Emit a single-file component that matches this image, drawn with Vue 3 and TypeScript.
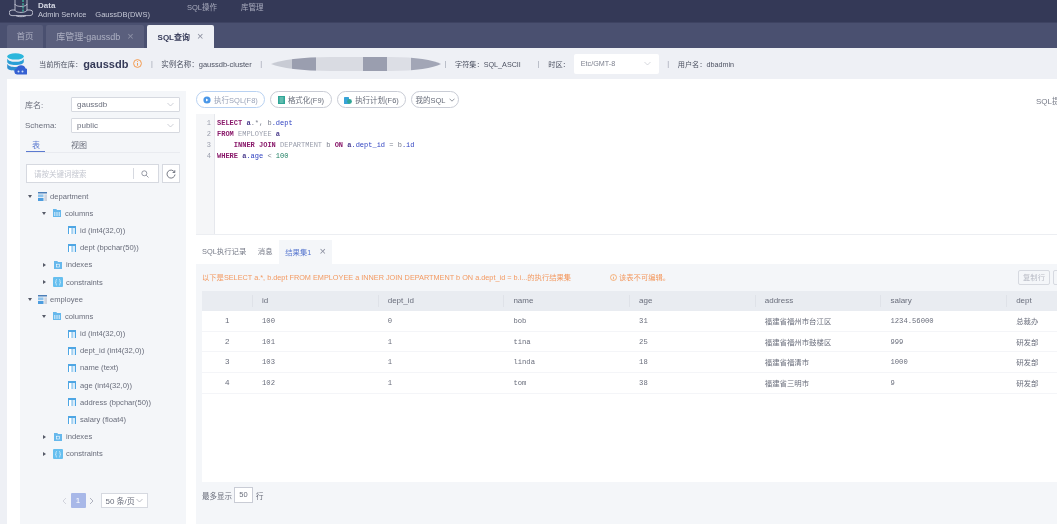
<script setup lang="ts">
type TreeNode = { label: string; level: number; kind: string; open?: boolean }

const tree: TreeNode[] = [
  { label: 'department', level: 0, kind: 'table', open: true },
  { label: 'columns', level: 1, kind: 'columns', open: true },
  { label: 'id (int4(32,0))', level: 2, kind: 'col' },
  { label: 'dept (bpchar(50))', level: 2, kind: 'col' },
  { label: 'indexes', level: 1, kind: 'indexes', open: false },
  { label: 'constraints', level: 1, kind: 'constraints', open: false },
  { label: 'employee', level: 0, kind: 'table', open: true },
  { label: 'columns', level: 1, kind: 'columns', open: true },
  { label: 'id (int4(32,0))', level: 2, kind: 'col' },
  { label: 'dept_id (int4(32,0))', level: 2, kind: 'col' },
  { label: 'name (text)', level: 2, kind: 'col' },
  { label: 'age (int4(32,0))', level: 2, kind: 'col' },
  { label: 'address (bpchar(50))', level: 2, kind: 'col' },
  { label: 'salary (float4)', level: 2, kind: 'col' },
  { label: 'indexes', level: 1, kind: 'indexes', open: false },
  { label: 'constraints', level: 1, kind: 'constraints', open: false }
]

const columns = ['', 'id', 'dept_id', 'name', 'age', 'address', 'salary', 'dept']

const rows = [
  ['1', '100', '0', 'bob', '31', '福建省福州市台江区', '1234.56000', '总裁办'],
  ['2', '101', '1', 'tina', '25', '福建省福州市鼓楼区', '999', '研发部'],
  ['3', '103', '1', 'linda', '18', '福建省福清市', '1000', '研发部'],
  ['4', '102', '1', 'tom', '38', '福建省三明市', '9', '研发部']
]
</script>

<template>
  <div class="page">
    <header class="topbar">
      <svg class="logo" width="24" height="20" viewBox="0 0 24 20" fill="none" stroke="#d5d8e4" stroke-width="0.8">
        <path d="M6 -1v11c0 1.400 2.700 2.400 6 2.400s6-1 6-2.400V-1M6 4c0 1.400 2.700 2.400 6 2.400s6-1 6-2.400" />
        <path d="M6 10H3a2.800 2.800 0 0 0 0 5.600h18a2.800 2.800 0 0 0 0-5.600h-3" />
        <path d="M7 15.600c1 1.400 9 1.400 10 0" />
        <path d="M14 0v13" stroke="#3fc8a8" stroke-width="1.200" stroke-dasharray="2 1.200" />
      </svg>
      <div class="brand">
        <div class="brand-top">Data</div>
        <div class="brand-sub"><span>Admin Service</span><span>GaussDB(DWS)</span></div>
      </div>
      <nav class="menu">
        <span>SQL操作</span>
        <span>库管理</span>
      </nav>
    </header>

    <div class="tabbar">
      <div class="tab home">首页</div>
      <div class="tab lib">库管理-gaussdb<i>×</i></div>
      <div class="tab active">SQL查询<i>×</i></div>
    </div>

    <div class="infobar">
      <svg class="db-icon" width="20" height="22" viewBox="0 0 20 22">
        <ellipse cx="8.500" cy="3.400" rx="8.300" ry="3.200" fill="#2bb6dc" />
        <path d="M.2 5.400c1 2.400 4.400 3.400 8.300 3.400s7.300-1 8.300-3.400v3.400c0 2-3.700 3.300-8.300 3.300S.2 10.800.2 8.800z" fill="#2a9fd6" />
        <path d="M.2 10.800c1 2.400 4.400 3.300 8.300 3.300 1.400 0 2.800-.2 4-.5l-3 4.400C4.300 18 .2 16.600.2 14.600z" fill="#2f8fd0" />
        <path d="M10 21.500a3 3 0 0 1-.4-5.900 4.800 4.800 0 0 1 9-.2 3.100 3.100 0 0 1 .4 6.100z" fill="#3560d2" />
        <circle cx="11.500" cy="18.500" r="1" fill="#cfe0fb" /><circle cx="15.500" cy="18.500" r="1" fill="#cfe0fb" />
      </svg>
      <span class="cur-label">当前所在库：</span>
      <strong class="cur-db">gaussdb</strong>
      <svg class="warn" width="9" height="9" viewBox="0 0 9 9" fill="none" stroke="#f39a4e" stroke-width="1">
        <circle cx="4.500" cy="4.500" r="3.900" /><path d="M4.500 2.200v.9M4.500 4v2.700" />
      </svg>
      <span class="sep">|</span>
      <span class="instance">实例名称：gaussdb-cluster</span>
      <span class="sep">|</span>
      <svg class="blob" width="170" height="16" viewBox="0 0 170 16">
        <defs>
          <clipPath id="blobclip"><path d="M0 8C10 4 30 1 60 1h60c25 0 42 3 50 7-8 4-25 7-50 7H60C30 15 10 12 0 8z" /></clipPath>
        </defs>
        <g clip-path="url(#blobclip)">
          <rect width="21" height="16" fill="#c8cbd4" />
          <rect x="21" width="24" height="16" fill="#9a9eaf" />
          <rect x="45" width="47" height="16" fill="#d9dbe2" />
          <rect x="92" width="24" height="16" fill="#9a9eaf" />
          <rect x="116" width="24" height="16" fill="#dcdee5" />
          <rect x="140" width="30" height="16" fill="#a2a6b6" />
        </g>
      </svg>
      <span class="sep after-blob">|</span>
      <span>字符集：SQL_ASCII</span>
      <span class="sep wide">|</span>
      <span>时区：</span>
      <div class="tz">
        <span>Etc/GMT-8</span>
        <svg class="chev" width="7" height="5" viewBox="0 0 7 5" fill="none" stroke="#c4c7d0" stroke-width="0.7"><path d="M.5 1l3 3 3-3" /></svg>
      </div>
      <span class="sep">|</span>
      <span>用户名：dbadmin</span>
    </div>

    <div class="content">
      <aside class="side">
        <div class="field">
          <label>库名:</label>
          <div class="select">
            <span>gaussdb</span>
            <svg class="chev" width="7" height="5" viewBox="0 0 7 5" fill="none" stroke="#b9bcc6" stroke-width="0.7"><path d="M.5 1l3 3 3-3" /></svg>
          </div>
        </div>
        <div class="field">
          <label>Schema:</label>
          <div class="select">
            <span>public</span>
            <svg class="chev" width="7" height="5" viewBox="0 0 7 5" fill="none" stroke="#b9bcc6" stroke-width="0.7"><path d="M.5 1l3 3 3-3" /></svg>
          </div>
        </div>
        <div class="side-tabs">
          <span class="side-tab on">表</span>
          <span class="side-tab">视图</span>
        </div>
        <div class="search-row">
          <div class="search">
            <span class="ph">请按关键词搜索</span>
            <span class="search-btn">
              <svg width="8" height="8" viewBox="0 0 8 8" fill="none" stroke="#7d818f" stroke-width="0.8"><circle cx="3.300" cy="3.300" r="2.500" /><path d="M5.200 5.200L7.500 7.500" /></svg>
            </span>
          </div>
          <div class="refresh">
            <svg width="10" height="10" viewBox="0 0 10 10" fill="none" stroke="#555a68" stroke-width="0.8"><path d="M8.600 3.300A4 4 0 1 0 9 5.500M8.800 1.200v2.300H6.600" /></svg>
          </div>
        </div>
        <ul class="tree">
          <li v-for="(node, i) in tree" :key="i" :class="['node', 'lv' + node.level]">
            <span v-if="node.level < 2" :class="['caret', node.open ? 'down' : 'right']"></span>
            <svg v-if="node.kind === 'table'" class="ico wide-ico" width="9" height="9" viewBox="0 0 9 9">
              <rect width="9" height="1.500" fill="#4c7fb8" />
              <rect y="2.400" width="5.500" height="2.800" fill="#8fc3ec" />
              <rect y="6" width="5.500" height="3" fill="#4d9ddf" />
              <rect x="6.300" y="2.400" width="2.700" height="6.600" fill="#cfd4de" />
            </svg>
            <svg v-else-if="node.kind === 'columns'" class="ico" width="8" height="8" viewBox="0 0 8 8">
              <path d="M0 0h3.200l.9 1H8v7H0z" fill="#66b8ec" />
              <path d="M1.800 3v4M4 3v4M6.200 3v4" stroke="#fff" stroke-width="0.8" />
            </svg>
            <svg v-else-if="node.kind === 'indexes'" class="ico" width="8" height="8" viewBox="0 0 8 8">
              <path d="M0 0h3.200l.9 1H8v7H0z" fill="#66b8ec" />
              <rect x="2.600" y="3.200" width="2.800" height="2.800" fill="none" stroke="#fff" stroke-width="0.6" />
            </svg>
            <svg v-else-if="node.kind === 'constraints'" class="ico box-ico" width="10" height="10" viewBox="0 0 10 10">
              <rect width="10" height="10" rx="1" fill="#66bfef" />
              <path d="M4 2.500c-1 0-1 .5-1 1.200v1c0 .4-.4.600-.7.600.3 0 .7.200.7.600v.8c0 .8 0 1.300 1 1.300M6 2.500c1 0 1 .5 1 1.200v1c0 .4.400.600.700.600-.3 0-.7.200-.7.600v.8c0 .8 0 1.300-1 1.300" fill="none" stroke="#fff" stroke-width="0.6" />
            </svg>
            <svg v-else class="ico" width="8" height="8" viewBox="0 0 8 8">
              <rect width="8" height="8" fill="#4ea6e4" />
              <rect x="1" y="2" width="2.600" height="6" fill="#fff" />
              <rect x="4.400" y="2" width="2.600" height="6" fill="#d9ecfa" />
            </svg>
            <span class="node-label">{{ node.label }}</span>
          </li>
        </ul>
        <div class="pager">
          <svg width="5" height="8" viewBox="0 0 5 8" fill="none" stroke="#c9ccd5" stroke-width="0.8"><path d="M4 1L1 4l3 3" /></svg>
          <span class="page-no">1</span>
          <svg width="5" height="8" viewBox="0 0 5 8" fill="none" stroke="#9da1ae" stroke-width="0.8"><path d="M1 1l3 3-3 3" /></svg>
          <div class="page-size">
            <span>50 条/页</span>
            <svg width="7" height="5" viewBox="0 0 7 5" fill="none" stroke="#9da1ae" stroke-width="0.7"><path d="M.5 1l3 3 3-3" /></svg>
          </div>
        </div>
      </aside>

      <main class="main">
        <div class="toolbar">
          <button class="btn run">
            <svg width="8" height="8" viewBox="0 0 8 8"><circle cx="4" cy="4" r="3.600" fill="#4a97e8" /><path d="M3 2.400L5.500 4 3 5.600z" fill="#fff" /></svg>
            执行SQL(F8)
          </button>
          <button class="btn fmt">
            <svg width="7" height="8" viewBox="0 0 7 8"><rect width="7" height="8" fill="#2fa596" /><path d="M1.500 2h4M1.500 4h4M1.500 6h4" stroke="#bfe8e0" stroke-width="0.7" /></svg>
            格式化(F9)
          </button>
          <button class="btn plan">
            <svg width="8" height="8" viewBox="0 0 8 8"><rect y="1" width="5" height="7" rx="0.600" fill="#38a3d8" /><circle cx="5.500" cy="5.500" r="2.400" fill="#2fa596" /></svg>
            执行计划(F6)
          </button>
          <button class="btn mine">
            我的SQL
            <svg width="6" height="4" viewBox="0 0 6 4" fill="none" stroke="#666b78" stroke-width="0.7"><path d="M.5.7L3 3.200 5.500.7" /></svg>
          </button>
          <span class="sql-more">SQL提示</span>
        </div>

        <div class="editor">
          <div class="gutter"><span>1</span><span>2</span><span>3</span><span>4</span></div>
          <pre class="code"><b>SELECT</b> <em>a</em>.*, b<u>.dept</u>
<b>FROM</b> <s>EMPLOYEE</s> <em>a</em>
    <b>INNER JOIN</b> <s>DEPARTMENT</s> b <b>ON</b> <em>a</em><u>.dept_id</u> = b<u>.id</u>
<b>WHERE</b> <em>a</em><u>.age</u> &lt; <tt>100</tt></pre>
        </div>

        <div class="res-tabs">
          <span class="res-tab">SQL执行记录</span>
          <span class="res-tab">消息</span>
          <span class="res-tab on">结果集1<i>×</i></span>
        </div>

        <section class="result">
          <div class="msg">
            <span class="msg-text">以下是SELECT a.*, b.dept FROM EMPLOYEE a INNER JOIN DEPARTMENT b ON a.dept_id = b.i...的执行结果集</span>
            <span class="msg-warn">
              <svg width="7" height="7" viewBox="0 0 7 7" fill="none" stroke="#f39a4e" stroke-width="0.7"><circle cx="3.500" cy="3.500" r="3" /><path d="M3.500 1.700v.6M3.500 3v2.300" /></svg>
              该表不可编辑。
            </span>
            <span class="copy">复制行</span>
            <span class="copy blank"></span>
          </div>
          <div class="table">
            <div class="tr head">
              <div v-for="(c, i) in columns" :key="i" class="th">{{ c }}</div>
            </div>
            <div v-for="r in rows" :key="r[0]" class="tr">
              <div v-for="(v, j) in r" :key="j" :class="['td', j === 0 ? 'idx' : '', j === 5 || j === 7 ? 'cjk' : '']">{{ v }}</div>
            </div>
          </div>
          <div class="limit">
            <span>最多显示</span>
            <span class="limit-input">50</span>
            <span>行</span>
          </div>
        </section>
      </main>
    </div>
  </div>
</template>

<style>
html, body {
  margin: 0;
  overflow: hidden;
}
</style>

<style scoped>
.page {
  width: 1057px;
  height: 524px;
  overflow: hidden;
  background: #eef0f5;
  font-family: "Liberation Sans", "Noto Sans CJK SC", sans-serif;
  font-size: 8px;
  color: #555a68;
  display: flex;
  flex-direction: column;
  filter: blur(0.35px);
}

.topbar {
  height: 22px;
  flex: none;
  background: #343957;
  border-bottom: 1px solid #3e4362;
  display: flex;
  align-items: flex-start;
  padding-left: 9px;
  color: #c5c8d6;
}

.logo {
  margin-top: 0;
  overflow: hidden;
}

.brand {
  margin-left: 5px;
  line-height: 9px;
  margin-top: 1px;
}

.brand-top {
  font-weight: 700;
  color: #d5d8e4;
}

.brand-sub {
  display: flex;
  gap: 9px;
  font-size: 7.5px;
  white-space: nowrap;
}

.menu {
  display: flex;
  gap: 24px;
  margin-left: 37px;
  line-height: 16px;
  color: #a8abbd;
  font-size: 7.5px;
}

.tabbar {
  height: 25px;
  flex: none;
  background: #4a5070;
  display: flex;
  align-items: flex-end;
  padding-left: 7px;
  gap: 3px;
}

.tab {
  height: 23px;
  line-height: 23px;
  background: #5a5f7d;
  color: #aeb1c3;
  text-align: center;
  border-radius: 2px 2px 0 0;
  white-space: nowrap;
  font-size: 8.5px;
}

.tab i {
  font-style: normal;
  font-size: 11px;
  margin-left: 7px;
  color: #8f93a8;
  vertical-align: -0.5px;
}

.tab.home {
  width: 36px;
}

.tab.lib {
  width: 98px;
  font-size: 9px;
}

.tab.active {
  width: 67px;
  background: #eef0f5;
  color: #343957;
  font-size: 8px;
  font-weight: 700;
}

.tab.active i {
  font-weight: 400;
  color: #8a8e9e;
}

.infobar {
  height: 31px;
  flex: none;
  display: flex;
  align-items: center;
  padding-left: 7px;
  white-space: nowrap;
  font-size: 7.2px;
  color: #4d5262;
}

.db-icon {
  margin-right: 12px;
}

.cur-db {
  font-size: 11px;
  color: #343957;
  margin-left: 1px;
  margin-right: 5px;
}

.instance {
  font-size: 7.5px;
}

.sep {
  margin: 0 8.5px;
  color: #9a9eac;
}

.blob {
  margin-right: 4px;
}

.after-blob {
  margin-left: 0;
}

.sep.wide {
  margin-left: 17px;
}

.tz {
  width: 85px;
  height: 20px;
  margin-left: 4px;
  padding: 0 8px 0 7px;
  box-sizing: border-box;
  background: #fff;
  border-radius: 2px;
  display: flex;
  align-items: center;
  justify-content: space-between;
  color: #7b7f8d;
}

.content {
  flex: 1;
  min-height: 0;
  margin-left: 7px;
  background: #fff;
  display: flex;
  padding: 12px 0 0 13px;
  gap: 10px;
}

.side {
  width: 166px;
  flex: none;
  background: #f4f6f9;
  padding: 6px 6px 0;
  box-sizing: border-box;
  display: flex;
  flex-direction: column;
  color: #6a6e7c;
}

.field {
  display: flex;
  align-items: center;
  height: 15px;
  margin-bottom: 6px;
}

.field label {
  width: 45px;
  flex: none;
  margin-left: -1px;
  padding-right: 1px;
}

.select {
  flex: 1;
  height: 15px;
  box-sizing: border-box;
  background: #fff;
  border: 1px solid #d6d9e0;
  border-radius: 1px;
  padding: 0 5px;
  display: flex;
  align-items: center;
  justify-content: space-between;
}

.side-tabs {
  display: flex;
  height: 13px;
  border-bottom: 1px solid #e9ebf0;
  align-items: flex-start;
}

.side-tab {
  position: relative;
  width: 45px;
  line-height: 13px;
}

.side-tab:first-child {
  padding-left: 6px;
  box-sizing: border-box;
  color: #5b7ad0;
}

.side-tab.on::after {
  content: "";
  position: absolute;
  left: 0;
  width: 19px;
  top: 12px;
  height: 1px;
  background: #5b7ad0;
}

.search-row {
  display: flex;
  gap: 3px;
  margin-top: 11px;
}

.search {
  width: 133px;
  height: 19px;
  box-sizing: border-box;
  background: #fff;
  border: 1px solid #d6d9e0;
  display: flex;
  align-items: center;
  padding-left: 7px;
  justify-content: space-between;
}

.ph {
  color: #c3c6cf;
  font-size: 7.5px;
}

.search-btn {
  width: 21px;
  height: 11px;
  border-left: 1px solid #d6d9e0;
  display: flex;
  align-items: center;
  justify-content: center;
  margin-right: 3px;
}

.refresh {
  width: 18px;
  height: 19px;
  box-sizing: border-box;
  border: 1px solid #d6d9e0;
  background: #fff;
  display: flex;
  align-items: center;
  justify-content: center;
}

.tree {
  list-style: none;
  margin: 4.5px 0 0;
  padding: 0;
}

.node {
  height: 17.2px;
  display: flex;
  align-items: center;
  white-space: nowrap;
  font-size: 7.6px;
}

.node.lv0 {
  padding-left: 2px;
}

.node.lv1 {
  padding-left: 16px;
}

.node.lv2 {
  padding-left: 42px;
}

.caret {
  width: 0;
  height: 0;
  box-sizing: border-box;
}

.caret.down {
  margin-right: 6px;
  border-left: 2.5px solid transparent;
  border-right: 2.5px solid transparent;
  border-top: 3px solid #555a68;
}

.caret.right {
  margin-left: 1px;
  margin-right: 7px;
  border-top: 2.5px solid transparent;
  border-bottom: 2.5px solid transparent;
  border-left: 3px solid #555a68;
}

.lv1 .caret.down {
  margin-right: 7px;
}

.lv1 .caret.right {
  margin-right: 8px;
}

.ico {
  flex: none;
  margin-right: 4px;
}

.ico.wide-ico {
  margin-right: 3px;
}

.ico.box-ico {
  margin-left: -1px;
  margin-right: 3px;
}

.pager {
  margin-top: 30.5px;
  padding-left: 36px;
  display: flex;
  align-items: center;
  gap: 3.5px;
}

.page-no {
  width: 15px;
  height: 15px;
  line-height: 15px;
  text-align: center;
  background: #a8b8e8;
  color: #fff;
  border-radius: 1px;
}

.page-size {
  width: 47px;
  height: 15px;
  box-sizing: border-box;
  margin-left: 3px;
  background: #fff;
  border: 1px solid #d6d9e0;
  display: flex;
  align-items: center;
  justify-content: space-between;
  padding: 0 4px;
  white-space: nowrap;
}

.main {
  flex: 1;
  min-width: 0;
  display: flex;
  flex-direction: column;
  overflow: hidden;
}

.toolbar {
  height: 18px;
  display: flex;
  gap: 5px;
  align-items: flex-start;
  flex: none;
  position: relative;
}

.btn {
  height: 17px;
  box-sizing: border-box;
  border: 1px solid #c9ccd5;
  border-radius: 9px;
  background: #fff;
  font: inherit;
  font-size: 7.5px;
  color: #666b78;
  padding: 0;
  display: flex;
  align-items: center;
  justify-content: center;
  gap: 3px;
  white-space: nowrap;
}

.btn.run {
  width: 69px;
  border-color: #b9d2f2;
  color: #9aa3b8;
}

.btn.fmt {
  width: 62px;
}

.btn.plan {
  width: 69px;
}

.btn.mine {
  width: 48px;
}

.sql-more {
  position: absolute;
  left: 840px;
  top: 4px;
  white-space: nowrap;
  color: #777b88;
}

.editor {
  height: 120px;
  margin-top: 5px;
  flex: none;
  display: flex;
  border-bottom: 1px solid #eceef2;
}

.gutter {
  width: 19px;
  flex: none;
  box-sizing: border-box;
  background: #f5f6f8;
  border-right: 1px solid #e6e8ed;
  padding: 4px 3px 0 0;
  display: flex;
  flex-direction: column;
  align-items: flex-end;
  font-family: "Liberation Mono", monospace;
  font-size: 7px;
  line-height: 11px;
  color: #9a9eac;
}

.code {
  margin: 0;
  padding: 4px 0 0 2px;
  font-family: "Liberation Mono", monospace;
  font-size: 7px;
  line-height: 11px;
  color: #7d818f;
}

.code b {
  font-weight: 700;
  color: #8a1a6b;
}

.code em {
  font-style: normal;
  font-weight: 700;
  color: #4a3c8c;
}

.code u {
  text-decoration: none;
  color: #2c3fc0;
}

.code s {
  text-decoration: none;
  color: #9a9eac;
}

.code tt {
  font-family: inherit;
  color: #1e7f62;
}

.res-tabs {
  height: 29px;
  flex: none;
  display: flex;
  align-items: flex-end;
  padding-left: 6px;
  gap: 11.5px;
  font-size: 7.4px;
}

.res-tab {
  height: 24px;
  line-height: 23px;
  white-space: nowrap;
  color: #777b88;
}

.res-tab.on {
  width: 53px;
  margin-left: -5px;
  box-sizing: border-box;
  padding-left: 6px;
  background: #f4f6f9;
  color: #5b7ad0;
}

.res-tab i {
  font-style: normal;
  font-size: 11px;
  color: #8a8e9e;
  margin-left: 8px;
  vertical-align: -0.5px;
}

.result {
  flex: 1;
  min-height: 0;
  background: #f4f6f9;
  padding-left: 6px;
  display: flex;
  flex-direction: column;
}

.msg {
  height: 26px;
  margin-bottom: 1px;
  flex: none;
  display: flex;
  align-items: center;
  color: #f39a62;
  white-space: nowrap;
  font-size: 7.3px;
}

.msg-text {
  width: 408px;
  flex: none;
}

.msg-warn {
  display: flex;
  align-items: center;
  gap: 2px;
  width: 408px;
  flex: none;
}

.copy {
  width: 32px;
  height: 15px;
  box-sizing: border-box;
  line-height: 13px;
  text-align: center;
  border: 1px solid #d6d9e0;
  border-radius: 2px;
  color: #b9bcc6;
  flex: none;
  margin-right: 3px;
}

.copy.blank {
  width: 20px;
}

.table {
  flex: none;
  height: 191px;
  background: #fff;
  overflow: hidden;
  display: flex;
  flex-direction: column;
}

.tr {
  display: grid;
  grid-template-columns: 50px repeat(7, 125.7px);
  height: 20.7px;
  border-bottom: 1px solid #f4f5f8;
  box-sizing: border-box;
  flex: none;
}

.tr.head {
  height: 20px;
  background: #e9ecf1;
  border-bottom: 0;
}

.th {
  line-height: 20px;
  padding-left: 10px;
  color: #6a6e7c;
  position: relative;
}

.th:not(:first-child)::before {
  content: "";
  position: absolute;
  left: 0;
  top: 4px;
  bottom: 4px;
  width: 1px;
  background: #dfe2e8;
}

.td {
  line-height: 20px;
  padding-left: 10px;
  font-family: "Liberation Mono", monospace;
  font-size: 7.2px;
  color: #6a6e7c;
  white-space: nowrap;
}

.td.idx {
  font-family: "Liberation Sans", sans-serif;
  font-size: 8px;
  padding-left: 23px;
}

.td.cjk {
  font-family: "Noto Sans CJK SC", sans-serif;
  font-size: 7.4px;
}

.limit {
  display: flex;
  align-items: center;
  gap: 2px;
  height: 16px;
  margin-top: 5px;
  color: #6a6e7c;
  font-size: 7.5px;
}

.limit-input {
  width: 19px;
  height: 16px;
  box-sizing: border-box;
  line-height: 14px;
  text-align: center;
  background: #fff;
  border: 1px solid #c9ccd5;
  margin-right: 1px;
}
</style>
